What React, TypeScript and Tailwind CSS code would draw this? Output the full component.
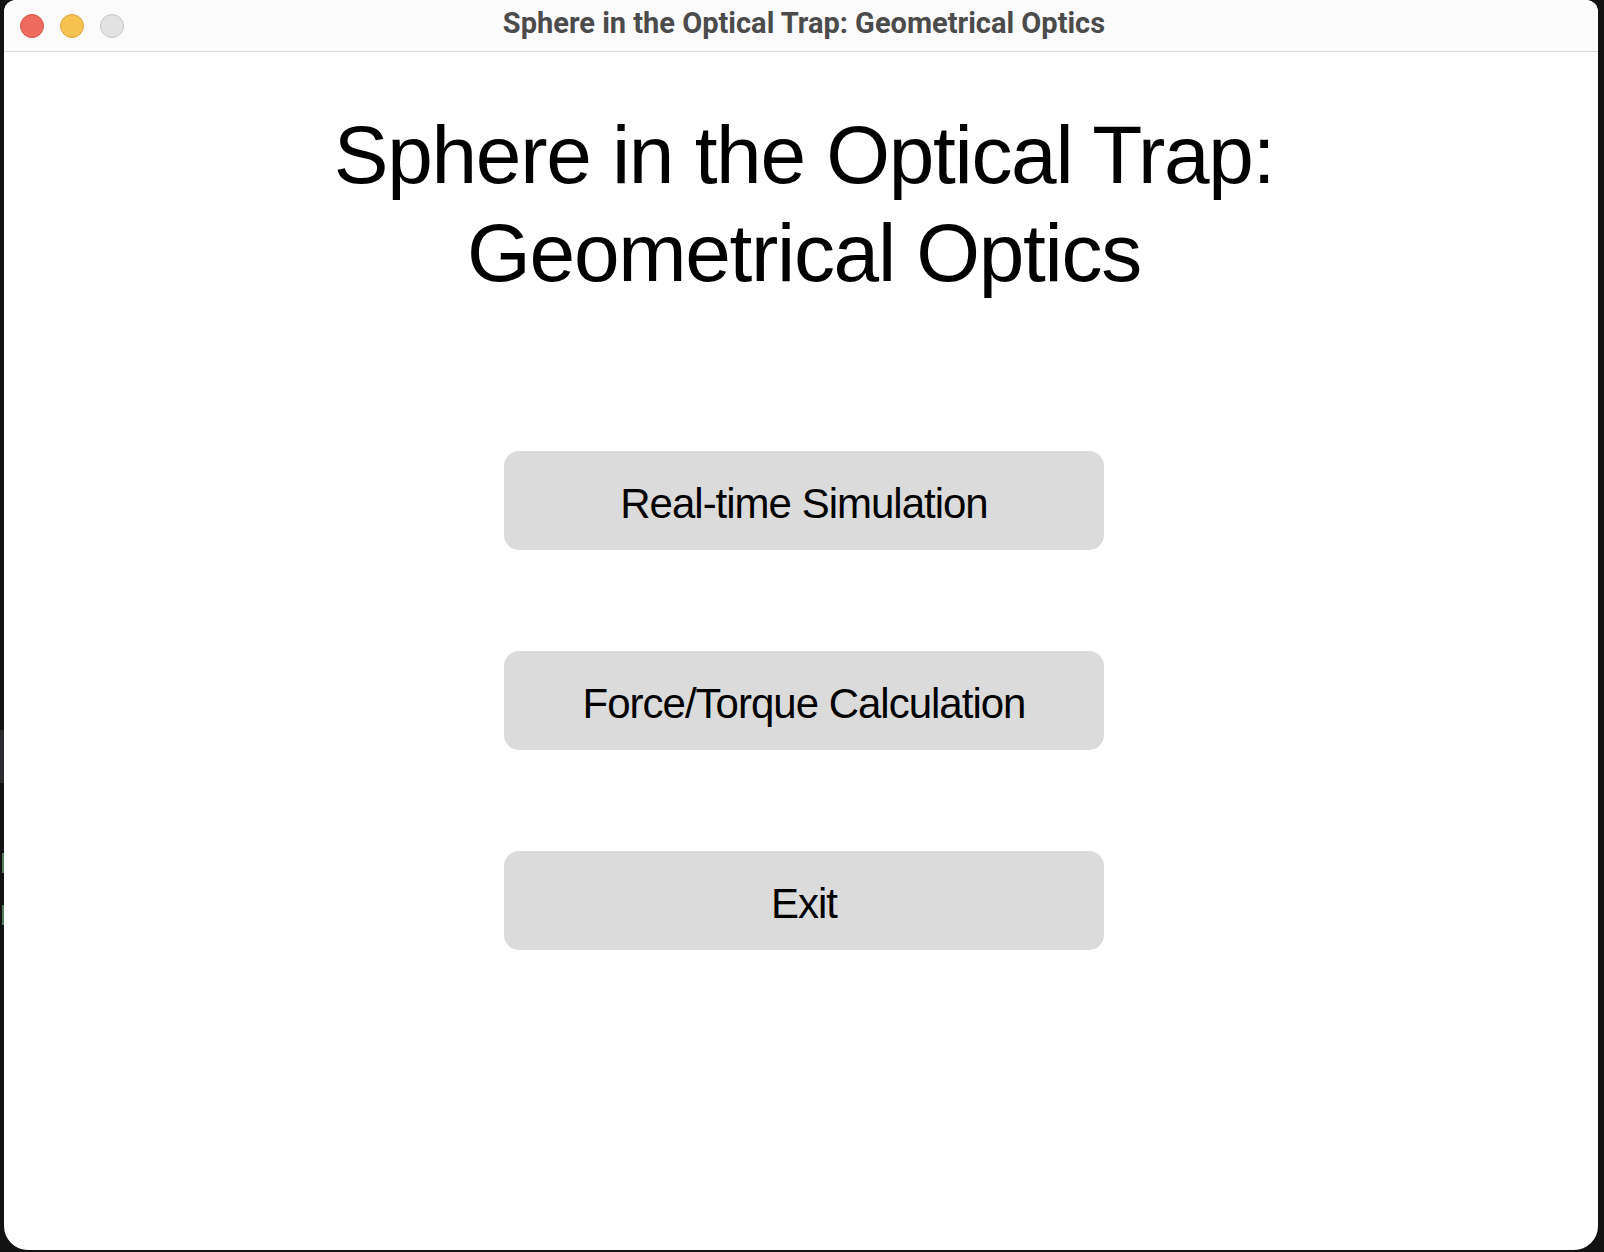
import React from 'react';

const menuItems = ['Real-time Simulation', 'Force/Torque Calculation', 'Exit'];

function TrafficLights() {
  return (
    <div className="flex items-center gap-[16px] pl-[16px]">
      <div className="w-[24px] h-[24px] rounded-full bg-[#ee6b60] border border-[#d4574c]" />
      <div className="w-[24px] h-[24px] rounded-full bg-[#f6c250] border border-[#d9a640]" />
      <div className="w-[24px] h-[24px] rounded-full bg-[#e2e2e2] border border-[#c8c8c8]" />
    </div>
  );
}

export default function App() {
  return (
    <div className="w-[1604px] h-[1252px] bg-[#121212] flex overflow-hidden">
      {/* desktop peeking out on the left */}
      <div className="w-[4px] flex flex-col">
        <div className="h-[730px]" />
        <div className="h-[53px] bg-[#2b2b2f]" />
        <div className="h-[70px]" />
        <div className="h-[20px] w-[2px] ml-[2px] bg-[#4f7a5a]" />
        <div className="h-[32px]" />
        <div className="h-[20px] w-[2px] ml-[2px] bg-[#4f7a5a]" />
      </div>

      <div className="w-[1594px] h-[1250px] bg-white rounded-t-[12px] rounded-b-[24px] overflow-hidden flex flex-col">
        {/* title bar */}
        <div className="h-[52px] shrink-0 bg-[#fbfbfb] border-b border-[#dcdcdc] relative flex items-center">
          <TrafficLights />
          <div className="absolute inset-0 flex items-center justify-center pl-[6px] pb-[4px] pointer-events-none">
            <span className="font-['Roboto',sans-serif] font-bold text-[29px] text-[#4b4b4b]">
              Sphere in the Optical Trap: Geometrical Optics
            </span>
          </div>
        </div>

        {/* content */}
        <div className="flex-1 flex flex-col items-center pl-[6px] pt-[54px] font-['Liberation_Sans',Arial,sans-serif] text-black">
          <h1 className="text-[82px] leading-[98px] tracking-[-1.3px] text-center font-normal">
            Sphere in the Optical Trap:
            <br />
            Geometrical Optics
          </h1>

          <div className="mt-[149px] flex flex-col gap-[101px]">
            {menuItems.map((label) => (
              <button
                key={label}
                type="button"
                className="w-[600px] h-[99px] rounded-[15px] bg-[#dbdbdb] flex items-center justify-center pt-[6px] text-[42px] tracking-[-1px] text-black"
              >
                {label}
              </button>
            ))}
          </div>
        </div>
      </div>

      <div className="w-[6px]" />
    </div>
  );
}
